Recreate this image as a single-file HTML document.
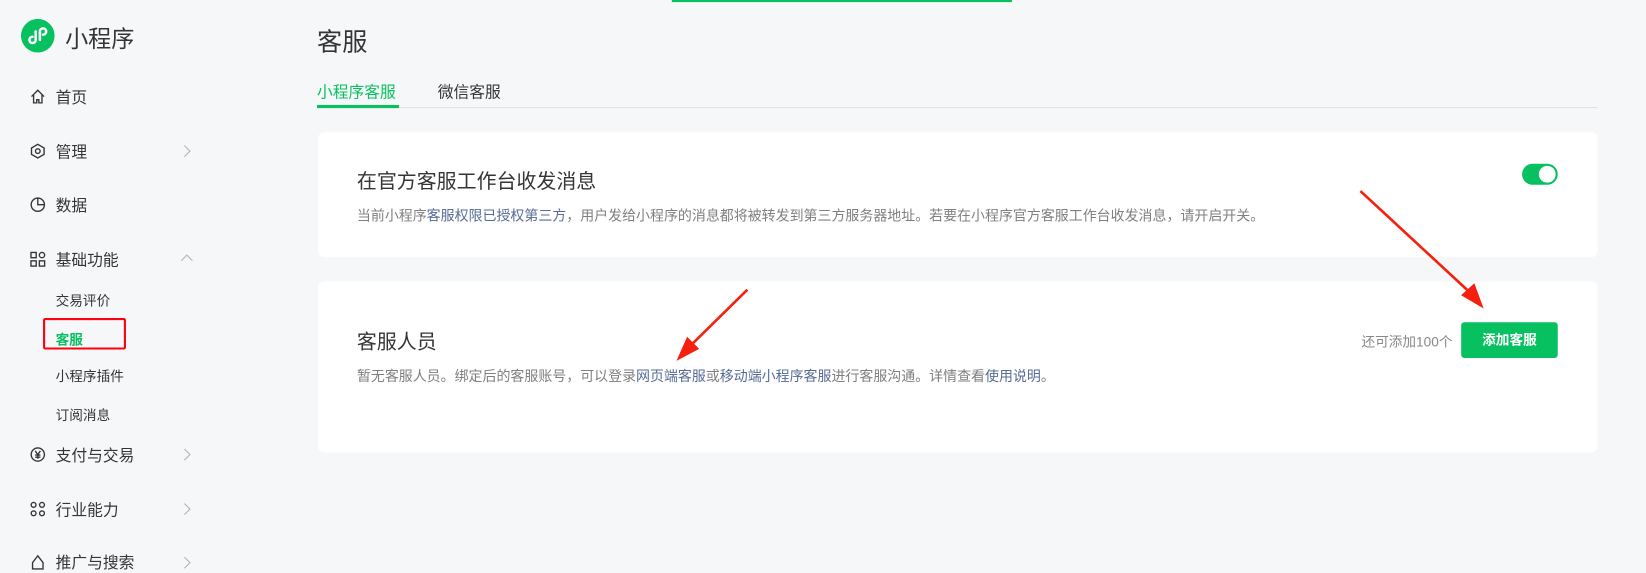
<!DOCTYPE html>
<html><head><meta charset="utf-8"><style>
*{margin:0;padding:0;box-sizing:border-box}
html,body{width:1646px;height:565px;overflow:hidden;background:#f6f7f9}
#w{position:absolute;left:0;top:0;width:1568px;height:539px;transform:scale(1.0497);transform-origin:0 0;font-family:"Liberation Sans","Noto Sans CJK SC",sans-serif;color:#353535}
.a{position:absolute;white-space:nowrap}
.mi{font-size:15px;color:#353535}
.si{font-size:13px;color:#353535}
.chev{position:absolute;width:8px;height:8px;border-top:1.3px solid #b2b2b2;border-right:1.3px solid #b2b2b2;transform:rotate(45deg)}
.card{position:absolute;left:303px;width:1219px;background:#fff;border-radius:6px}
.lk{color:#576b95}
</style></head><body><div id="w">
<div class="a" style="left:640px;top:0;width:324px;height:2px;background:#07c160"></div>
<svg class="a" style="left:20px;top:18px" width="32" height="32" viewBox="0 0 32 32"><circle cx="16" cy="16" r="16" fill="#07c160"/><path d="M14 12v8a3 3 0 1 1-3-3M18 20v-8a3 3 0 1 1 3 3" stroke="#fff" stroke-width="2.4" fill="none" stroke-linecap="round"/></svg>
<div class="a" style="left:62px;top:20px;font-size:22px;color:#353535">小程序</div>

<svg class="a" style="left:28px;top:84px" width="16" height="16" viewBox="0 0 16 16" fill="none" stroke="#353535" stroke-width="1.3"><path d="M2 8 8 2l6 6M4 6.5V14h3v-3h2v3h3V6.5"/></svg>
<div class="a mi" style="left:53px;top:82px">首页</div>
<svg class="a" style="left:28px;top:136px" width="16" height="16" viewBox="0 0 16 16" fill="none" stroke="#353535" stroke-width="1.3"><path d="M8 1.5 14 5v6l-6 3.5L2 11V5z"/><circle cx="8" cy="8" r="2.2"/></svg>
<div class="a mi" style="left:53px;top:134px">管理</div><div class="chev" style="left:172px;top:140px"></div>
<svg class="a" style="left:28px;top:187px" width="16" height="16" viewBox="0 0 16 16" fill="none" stroke="#353535" stroke-width="1.3"><circle cx="8" cy="8" r="6.3"/><path d="M8 2v6h6"/></svg>
<div class="a mi" style="left:53px;top:185px">数据</div>
<svg class="a" style="left:28px;top:239px" width="16" height="16" viewBox="0 0 16 16" fill="none" stroke="#353535" stroke-width="1.3"><rect x="1.5" y="1.5" width="5" height="5"/><rect x="1.5" y="9.5" width="5" height="5"/><rect x="9.5" y="9.5" width="5" height="5"/><circle cx="12" cy="4" r="2.5"/></svg>
<div class="a mi" style="left:53px;top:237px">基础功能</div><div class="chev" style="left:174px;top:244px;transform:rotate(-45deg)"></div>
<div class="a si" style="left:53px;top:276px">交易评价</div>
<div class="a" style="left:41px;top:303px;width:79px;height:30px;border:2px solid #f01;border-radius:2px"></div>
<div class="a si" style="left:53px;top:313px;color:#07c160;font-weight:bold">客服</div>
<div class="a si" style="left:53px;top:348px">小程序插件</div>
<div class="a si" style="left:53px;top:385px">订阅消息</div>
<svg class="a" style="left:28px;top:425px" width="16" height="16" viewBox="0 0 16 16" fill="none" stroke="#353535" stroke-width="1.3"><circle cx="8" cy="8" r="6.3"/><path d="M5.5 4.5 8 8l2.5-3.5M8 8v4M5.5 8.5h5M5.5 10.5h5"/></svg>
<div class="a mi" style="left:53px;top:423px">支付与交易</div><div class="chev" style="left:172px;top:429px"></div>
<svg class="a" style="left:28px;top:477px" width="16" height="16" viewBox="0 0 16 16" fill="none" stroke="#353535" stroke-width="1.3"><circle cx="4" cy="4" r="2.3"/><circle cx="12" cy="4" r="2.3"/><circle cx="4" cy="12" r="2.3"/><circle cx="12" cy="12" r="2.3"/></svg>
<div class="a mi" style="left:53px;top:475px">行业能力</div><div class="chev" style="left:172px;top:481px"></div>
<svg class="a" style="left:28px;top:528px" width="16" height="16" viewBox="0 0 16 16" fill="none" stroke="#353535" stroke-width="1.3"><path d="M8 1.5 13 8v6H3V8z"/></svg>
<div class="a mi" style="left:53px;top:525px">推广与搜索</div><div class="chev" style="left:172px;top:532px"></div>

<div class="a" style="left:302px;top:20px;font-size:24px;color:#353535">客服</div>
<div class="a" style="left:302px;top:77px;font-size:15px;color:#07c160">小程序客服</div>
<div class="a" style="left:417px;top:77px;font-size:15px;color:#353535">微信客服</div>
<div class="a" style="left:302px;top:102px;width:1220px;height:1px;background:#e0e0e0"></div>
<div class="a" style="left:302px;top:100px;width:78px;height:3px;background:#07c160"></div>

<div class="card" style="top:126px;height:119px">
<div class="a" style="left:37px;top:32px;font-size:19px;color:#353535">在官方客服工作台收发消息</div>
<div class="a" style="left:37px;top:69px;font-size:13.3px;color:#7f7f7f">当前小程序<span class="lk">客服权限已授权第三方</span>，用户发给小程序的消息都将被转发到第三方服务器地址。若要在小程序官方客服工作台收发消息，请开启开关。</div>
<div class="a" style="left:1147px;top:30px;width:34px;height:20px;border-radius:10px;background:#07c160"><div style="position:absolute;right:2px;top:2px;width:16px;height:16px;border-radius:50%;background:#fff"></div></div>
</div>
<div class="card" style="top:268px;height:163px">
<div class="a" style="left:37px;top:43px;font-size:19px;color:#353535">客服人员</div>
<div class="a" style="left:37px;top:80px;font-size:13.3px;color:#7f7f7f">暂无客服人员。绑定后的客服账号，可以登录<span class="lk">网页端客服</span>或<span class="lk">移动端小程序客服</span>进行客服沟通。详情查看<span class="lk">使用说明</span>。</div>
<div class="a" style="left:994px;top:47px;font-size:13px;color:#888">还可添加100个</div>
<div class="a" style="left:1089px;top:39px;width:92px;height:34px;background:#07c160;border-radius:3px;color:#fff;font-size:13px;font-weight:bold;text-align:center;line-height:34px">添加客服</div>
</div>

<svg class="a" style="left:0;top:0" width="1568" height="539">
<g stroke="#f5200e" stroke-width="2.5" fill="#f5200e">
<line x1="1296" y1="182" x2="1404" y2="282"/><polygon points="1411,291 1394,281 1404,272"/>
<line x1="712" y1="276" x2="654" y2="333"/><polygon points="647,341 655,323 664,332"/>
</g></svg>
</div></body></html>
